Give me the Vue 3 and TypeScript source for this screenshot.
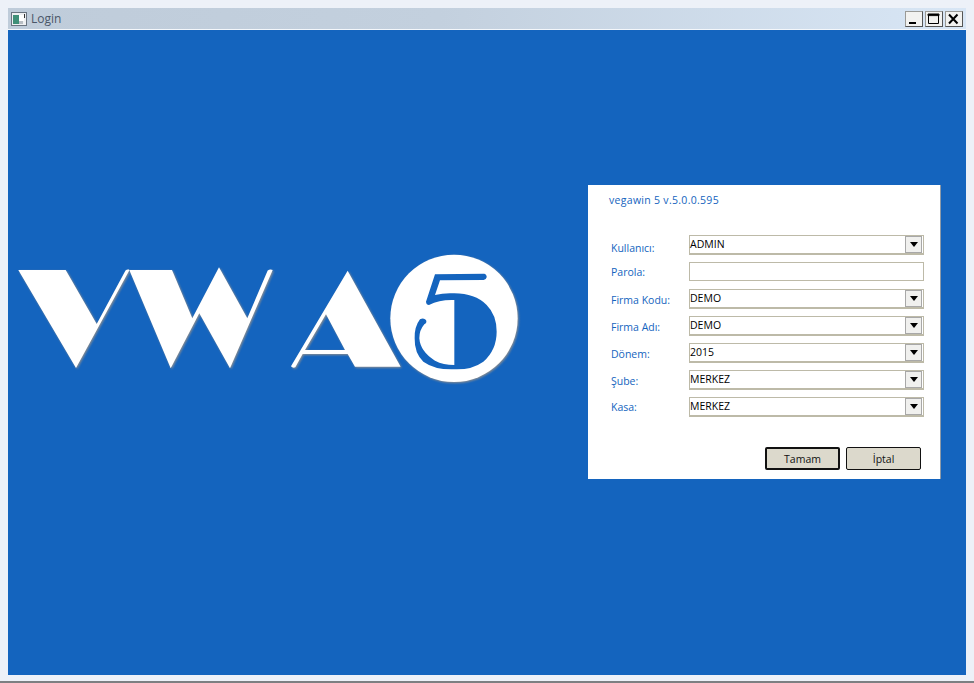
<script setup lang="ts">
const rows = [
  { label: 'Kullanıcı:', value: 'ADMIN', combo: true, lh: 26 },
  { label: 'Parola:', value: '', combo: false, lh: 20 },
  { label: 'Firma Kodu:', value: 'DEMO', combo: true, lh: 22 },
  { label: 'Firma Adı:', value: 'DEMO', combo: true, lh: 22 },
  { label: 'Dönem:', value: '2015', combo: true, lh: 22 },
  { label: 'Şube:', value: 'MERKEZ', combo: true, lh: 22 },
  { label: 'Kasa:', value: 'MERKEZ', combo: true, lh: 20 },
]
</script>

<template>
  <div class="window">
    <div class="titlebar">
      <svg class="app-icon" width="16" height="14" viewBox="0 0 16 14">
        <rect x="0.5" y="0.5" width="15" height="13" fill="#eef0f2" stroke="#6a7480" />
        <rect x="2" y="3" width="6" height="9" fill="#3f8f78" />
        <rect x="8" y="3" width="5" height="6" fill="#ffffff" />
        <rect x="8" y="9" width="4" height="3" fill="#b8bec4" />
        <rect x="13" y="2" width="1" height="4" fill="#333" />
      </svg>
      <span class="title">Login</span>
      <div class="controls">
        <button class="ctl">
          <svg width="17" height="16" viewBox="0 0 17 16"><rect x="4" y="11" width="7" height="2" fill="#000" /></svg>
        </button>
        <button class="ctl">
          <svg width="17" height="16" viewBox="0 0 17 16"><path d="M3.5 3.5h10v9h-10z M3 3h11v1.6H3z" fill="none" stroke="#000" /></svg>
        </button>
        <button class="ctl">
          <svg width="17" height="16" viewBox="0 0 17 16"><path d="M4 3.5l8.5 9M12.5 3.5l-8.5 9" stroke="#000" stroke-width="2" /></svg>
        </button>
      </div>
    </div>
    <div class="client">
      <svg class="logo" width="520" height="140" viewBox="0 0 520 140">
        <g transform="translate(-8,-245)">
          <g class="logo-art">
            <path d="M18.3 270H65.7L96.7 324 125.5 270.5Q127 269 129 269.5 129.5 270 129 271L76 368Z" fill="#fff" />
            <path d="M129.3 270H172L192.3 318.3 219 267.3 247.3 318.3 267.7 270.5Q270 269 272.7 270L230 368.3 199.3 313.3 170.7 368.3Z" fill="#fff" />
            <path transform="translate(280,245) scale(0.3333)" fill-rule="evenodd" d="M203 77L362 365H225L203 327H68L46 367Q38 370 33 364ZM138 208L75 315H195Z" fill="#fff" />
            <g transform="translate(385,260) scale(0.3333)">
              <circle cx="207" cy="175" r="191" fill="#fff" />
              <path d="M150 43L298 41Q306 44 305 52 303 60 296 60L165 61 150 105Q178 98 208 100 270 100 305 135 335 165 335 215 335 270 295 305 260 330 208 328 150 330 115 305 88 280 89 235 88 200 105 178 116 172 123 180 127 188 118 193 103 210 103 235 106 275 150 302 175 315 208 315V120Q165 118 132 135 124 135 123 125Z" fill="#1464be" />
            </g>
          </g>
        </g>
      </svg>
      <div class="panel">
        <div class="version">vegawin 5 v.5.0.0.595</div>
        <div class="form">
          <template v-for="row in rows" :key="row.label">
            <label class="label" :style="{ lineHeight: row.lh + 'px' }">{{ row.label }}</label>
            <div class="field" :class="{ plain: !row.combo }">
              <span class="value">{{ row.value }}</span>
              <span v-if="row.combo" class="drop"><i class="arrow" /></span>
            </div>
          </template>
        </div>
        <div class="actions">
          <button class="btn default">Tamam</button>
          <button class="btn">İptal</button>
        </div>
      </div>
    </div>
  </div>
</template>

<style>
html,
body {
  margin: 0;
  background: #e8edf5;
}
</style>

<style scoped>
.window {
  box-sizing: border-box;
  width: 974px;
  height: 683px;
  padding: 8px 8px 6px;
  display: flex;
  flex-direction: column;
  background: #edf1f8;
  border-bottom: 2px solid #7d7f82;
  font-family: "Open Sans", "Liberation Sans", sans-serif;
}

.titlebar {
  height: 21px;
  display: flex;
  align-items: center;
  padding: 0 3px 0 3px;
  background: linear-gradient(90deg, #bfccda 0%, #c3d0de 45%, #d8e6f5 100%);
  border-bottom: 1px solid #f4f7fb;
  flex: none;
}

.app-icon {
  margin-right: 4px;
}

.title {
  font-size: 12px;
  color: #4a5668;
}

.controls {
  margin-left: auto;
  display: flex;
  gap: 2px;
}

.ctl {
  width: 18px;
  height: 16px;
  padding: 0;
  background: #f2f2f0;
  border: 1px solid #9a9a96;
  border-right-color: #555;
  border-bottom-color: #555;
  display: block;
}

.ctl svg {
  display: block;
  margin: -1px 0 0 -1px;
}

.client {
  flex: 1;
  display: flex;
  background: #1464be;
}

.logo {
  flex: none;
  margin-top: 215px;
  display: block;
}

.logo-art {
  filter: drop-shadow(1px 1px 0.8px #8f8f8f);
}

.panel {
  box-sizing: border-box;
  width: 353px;
  height: 294px;
  margin: 155px 0 0 60px;
  padding: 8px 17px 0 21px;
  background: #fff;
  border-right: 1px solid #8e9aa8;
  display: flex;
  flex-direction: column;
  font-size: 10.5px;
  color: #1464be;
}

.version {
  height: 16px;
  line-height: 14px;
  letter-spacing: 0.3px;
}

.form {
  margin-top: 26px;
  display: grid;
  grid-template-columns: 78px 235px;
  grid-auto-rows: 20px;
  row-gap: 7px;
  padding-left: 2px;
}

.field {
  box-sizing: border-box;
  display: flex;
  align-items: center;
  border: 1px solid #bdbaa8;
  border-bottom-width: 2px;
  color: #000;
  background: #fff;
}

.field.plain {
  border-bottom-width: 1px;
  height: 19px;
}

.value {
  flex: 1;
  line-height: 15px;
  margin-top: -1px;
}

.drop {
  box-sizing: border-box;
  width: 17px;
  height: 17px;
  margin-right: 1px;
  background: #f0f0ee;
  border: 1px solid #a8a8a8;
  display: flex;
  align-items: center;
  justify-content: center;
}

.arrow {
  width: 0;
  height: 0;
  border-style: solid;
  border-width: 5px 4.5px 0;
  border-color: #000 transparent transparent;
}

.actions {
  margin-top: auto;
  margin-bottom: 9px;
  display: flex;
  justify-content: flex-end;
  gap: 6px;
  padding-right: 2px;
}

.btn {
  box-sizing: border-box;
  width: 75px;
  height: 23px;
  padding: 0;
  background: #dcd9cc;
  border: 1px solid #111;
  border-radius: 2px;
  font: inherit;
  color: #111;
}

.btn.default {
  border-width: 2px;
}
</style>
